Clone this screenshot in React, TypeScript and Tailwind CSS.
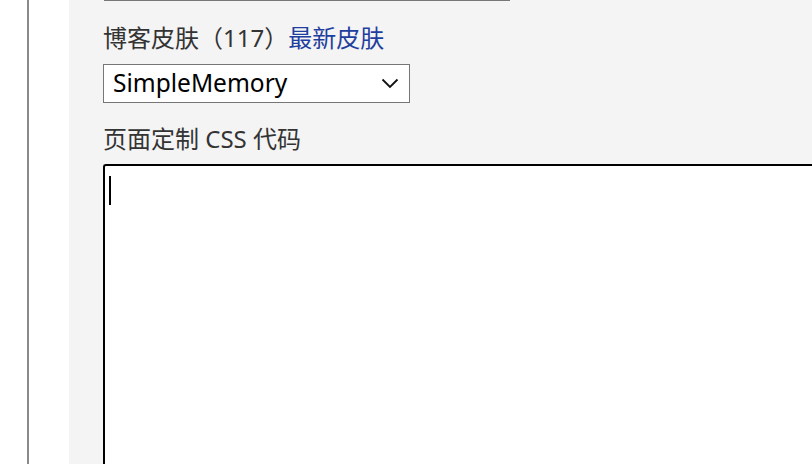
import React from "react";

export default function App() {
  const font = { fontFamily: '"Noto Sans", "Noto Sans CJK SC", sans-serif' };
  return (
    <div className="w-[812px] h-[464px] overflow-hidden flex bg-white" style={font}>
      <div className="w-[27px] shrink-0 bg-white" />
      <div className="w-[2px] shrink-0 bg-[#8a8a8a]" />
      <div className="w-[40px] shrink-0 bg-white" />
      <div className="flex-1 bg-[#f4f4f4] pl-[34px] flex flex-col">
        <div className="ml-px w-[406px] h-px bg-[#777777]" />
        <div className="mt-[21px] h-[32px] leading-[32px] text-[24px] text-[#333333] whitespace-nowrap">
          博客皮肤（117）<a className="text-[#1f3f9e]">最新皮肤</a>
        </div>
        <div className="mt-[10px] w-[307px] h-[39px] border border-[#767676] bg-white flex items-center justify-between pl-[9px] pr-[10px]">
          <span className="text-[24.5px] leading-none text-black">SimpleMemory</span>
          <svg width="18" height="11" viewBox="0 0 18 11" fill="none">
            <path d="M1.5 1.5 L9 9 L16.5 1.5" stroke="#111" strokeWidth="1.8" />
          </svg>
        </div>
        <div className="mt-[20px] h-[32px] leading-[32px] text-[24px] text-[#333333] whitespace-nowrap">
          页面定制 CSS 代码
        </div>
        <div className="mt-[9px] flex-1 border-2 border-black border-r-0 border-b-0 rounded-tl-[3px] bg-white pl-[4px] pt-[10px]">
          <div className="w-[2px] h-[29px] bg-black" />
        </div>
      </div>
    </div>
  );
}
